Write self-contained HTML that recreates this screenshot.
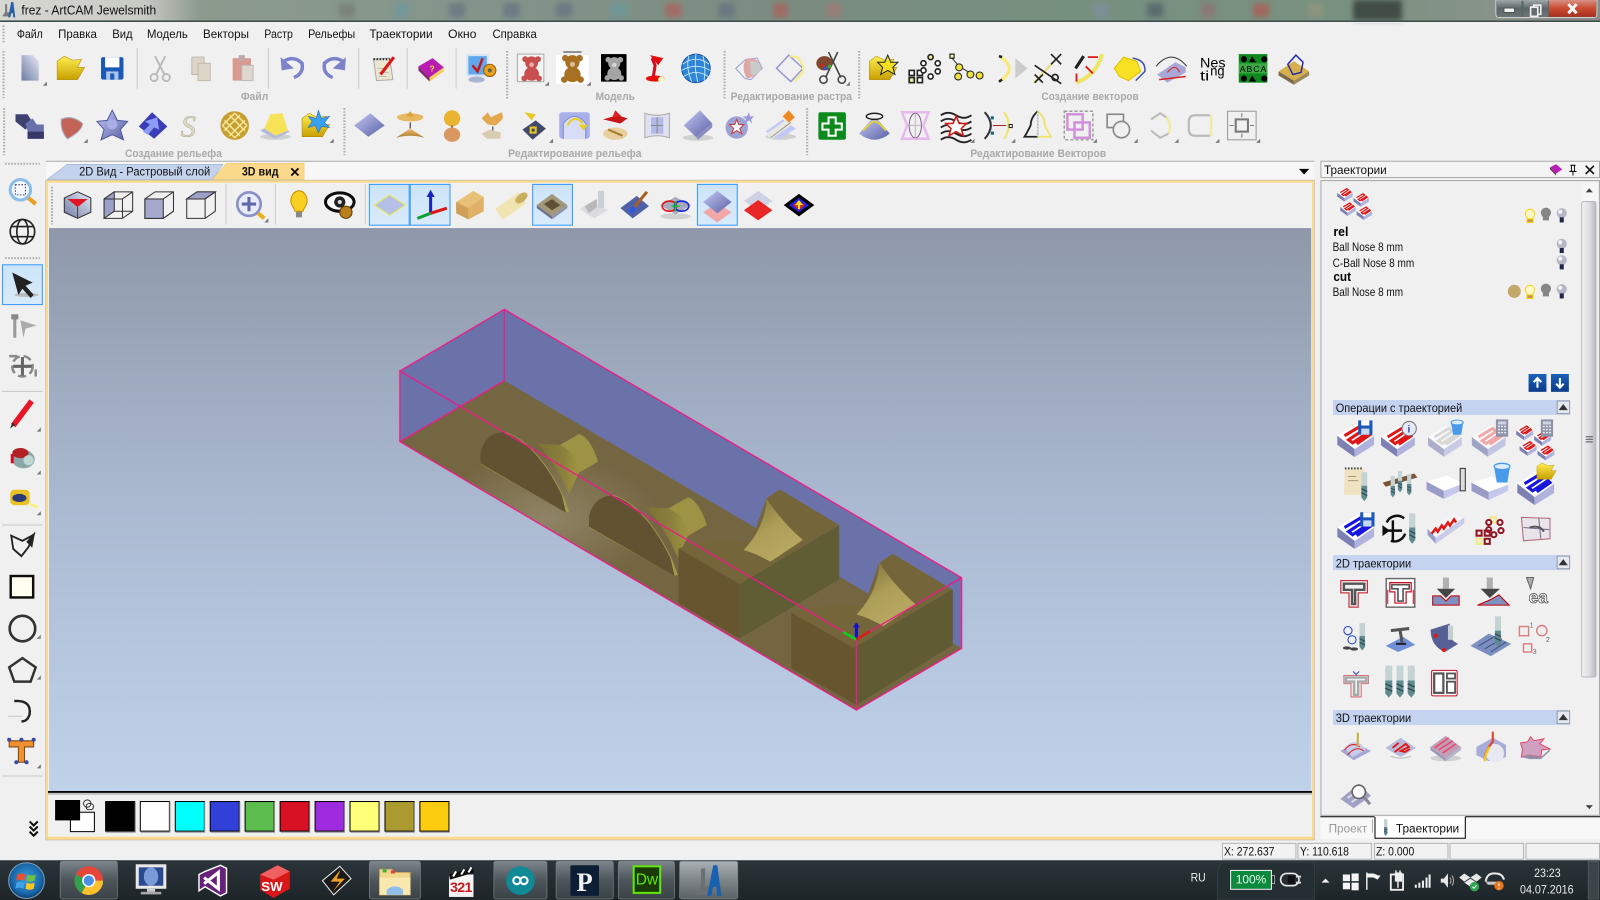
<!DOCTYPE html>
<html lang="ru"><head><meta charset="utf-8"><title>frez - ArtCAM Jewelsmith</title>
<style>
html,body{margin:0;padding:0;background:#f0f0f0;overflow:hidden}
svg{display:block}
text{font-family:"Liberation Sans","DejaVu Sans",sans-serif;font-size:12px}
.l{font-weight:bold;font-size:10.5px;fill:#a9a9a9}
.ne{vector-effect:non-scaling-stroke}
</style></head><body>
<svg xmlns="http://www.w3.org/2000/svg" width="1600" height="900" viewBox="0 0 1568 882" fill="#111">
<defs>
<filter id="s" x="-2%" y="-2%" width="104%" height="104%"><feGaussianBlur stdDeviation=".35"/></filter>
<filter id="b3" x="-20%" y="-50%" width="140%" height="200%"><feGaussianBlur stdDeviation="2.5"/></filter>
<linearGradient id="tb" x1="0" x2="1" y1="0" y2="0">
<stop offset="0" stop-color="#d8d8d2"/><stop offset=".09" stop-color="#c8cac4"/><stop offset=".125" stop-color="#8d9a8e"/><stop offset=".3" stop-color="#83958a"/><stop offset=".5" stop-color="#7a8c80"/><stop offset=".68" stop-color="#76907f"/><stop offset=".84" stop-color="#78917f"/><stop offset=".94" stop-color="#8a938a"/><stop offset="1" stop-color="#8a8a86"/>
</linearGradient>
<linearGradient id="vp" x1="0" x2="0" y1="0" y2="1"><stop offset="0" stop-color="#8f98aa"/><stop offset=".5" stop-color="#abbad1"/><stop offset="1" stop-color="#bfd2ea"/></linearGradient>
<linearGradient id="tk" x1="0" x2="0" y1="0" y2="1"><stop offset="0" stop-color="#2b3439"/><stop offset="1" stop-color="#1d2529"/></linearGradient>
<linearGradient id="bt" x1="0" x2="0" y1="0" y2="1"><stop offset="0" stop-color="#7d868b"/><stop offset=".5" stop-color="#4d565b"/><stop offset="1" stop-color="#3a4247"/></linearGradient>
<linearGradient id="ba" x1="0" x2="0" y1="0" y2="1"><stop offset="0" stop-color="#aab0b3"/><stop offset=".5" stop-color="#7e868a"/><stop offset="1" stop-color="#5a6266"/></linearGradient>
<linearGradient id="gb" x1="0" x2="1" y1="0" y2="1"><stop offset="0" stop-color="#c4c9f4"/><stop offset="1" stop-color="#5a60a4"/></linearGradient>
<linearGradient id="gd" x1="1" x2="0" y1="0" y2="1"><stop offset="0" stop-color="#e6eaf4"/><stop offset="1" stop-color="#6f7ca4"/></linearGradient>
<linearGradient id="gy" x1="0" x2="0" y1="0" y2="1"><stop offset="0" stop-color="#ffee50"/><stop offset="1" stop-color="#c8a000"/></linearGradient>
<linearGradient id="go" x1="0" x2="0" y1="0" y2="1"><stop offset="0" stop-color="#f4c070"/><stop offset="1" stop-color="#a87828"/></linearGradient>
<linearGradient id="sb" x1="0" x2="1" y1="0" y2="0"><stop offset="0" stop-color="#f2f2f2"/><stop offset=".5" stop-color="#e0e0e4"/><stop offset="1" stop-color="#b8b8be"/></linearGradient>
<linearGradient id="cl" x1="0" x2="0" y1="0" y2="1"><stop offset="0" stop-color="#d89084"/><stop offset=".5" stop-color="#c84a30"/><stop offset="1" stop-color="#a83020"/></linearGradient>
<linearGradient id="wb" x1="0" x2="0" y1="0" y2="1"><stop offset="0" stop-color="#a0a8a8"/><stop offset=".5" stop-color="#5c6668"/><stop offset="1" stop-color="#6c7476"/></linearGradient>
<linearGradient id="cf" x1="0" x2="1" y1="0" y2="0"><stop offset="0" stop-color="#7c7034"/><stop offset=".6" stop-color="#8a7f3c"/><stop offset="1" stop-color="#a09440"/></linearGradient>
<linearGradient id="fl" x1="0" x2=".6" y1="0" y2="1"><stop offset="0" stop-color="#7a6c38"/><stop offset=".55" stop-color="#ad9e58"/><stop offset="1" stop-color="#b8a962"/></linearGradient>
<linearGradient id="blu" x1="0" x2="0" y1="0" y2="1"><stop offset="0" stop-color="#1a62b8"/><stop offset="1" stop-color="#0c3a88"/></linearGradient>
<radialGradient id="lp" cx=".26" cy=".42" r=".2"><stop offset="0" stop-color="#8f8466"/><stop offset="1" stop-color="#756642"/></radialGradient>
<radialGradient id="orb" cx=".5" cy=".45" r=".6"><stop offset="0" stop-color="#3aa0e0"/><stop offset=".7" stop-color="#1866a8"/><stop offset="1" stop-color="#0c2c58"/></radialGradient>
<linearGradient id="hl" x1="0" x2="0" y1="0" y2="1"><stop offset="0" stop-color="#cce4f8"/><stop offset="1" stop-color="#d8eafa"/></linearGradient>

<polygon id="mk" points="0,4 4,4 4,0" fill="#777"/>

<g id="tp">
<polygon points="-18,-3 -1,10 -1,18 -18,6" fill="#7d80b2"/>
<polygon points="-1,10 18,-3 18,6 -1,18" fill="#aeb2dc"/>
<polygon points="-18,-3 1,-15 18,-3 -1,10" fill="#fff"/>
<path d="M-11,-3 L4,-12 L8,-9 L-7,1 L-3,4 L12,-6 L14,-4 L1,5" fill="none" stroke="currentColor" stroke-width="3.1"/>
</g>
<g id="tps"><use href="#tp" transform="translate(-8,-9) scale(.42)"/><use href="#tp" transform="translate(8,-4) scale(.42)"/><use href="#tp" transform="translate(-5,5) scale(.42)"/><use href="#tp" transform="translate(11,9) scale(.42)"/></g>
<g id="calc"><rect x="-6" y="-8" width="12" height="17" fill="#8d93a8"/><rect x="-4" y="-6" width="8" height="3" fill="#d0d4e0"/><path d="M-4,-1h2m1,0h2m1,0h2M-4,2h2m1,0h2m1,0h2M-4,5h2m1,0h2m1,0h2" stroke="#e8e8f0" stroke-width="1.5"/></g>
<g id="floppy"><rect x="-7" y="-7" width="14" height="14" fill="#1e58b8"/><rect x="-4" y="-7" width="8" height="5" fill="#fff"/><rect x="-4" y="1" width="8" height="6" fill="#c8d8f0"/></g>
<g id="mill"><rect x="-3" y="-15" width="6" height="14" fill="#c4d4d4"/><path d="M-3,-1h6v12l-3,4l-3,-4z" fill="#5f8a90"/><path d="M-3,2l6,3M-3,6l6,3" stroke="#2f4a50" stroke-width="1.2"/></g>
<g id="bin"><path d="M-6,-6 H6 L4,6 H-4 Z" fill="#4a9ae8"/><ellipse cy="-6" rx="6" ry="2.4" fill="#d8ecfa" stroke="#4a9ae8"/></g>
<g id="fold"><polygon points="-14,-7 -7,-12 1,-8 10,-9 6,-1 13,-1 6,11 -14,11" fill="url(#gy)" stroke="#a88000" stroke-width=".5"/></g>
<g id="bear"><circle cx="-7" cy="-10" r="3.2" fill="currentColor"/><circle cx="7" cy="-10" r="3.2" fill="currentColor"/><circle cy="-6" r="7" fill="currentColor"/><ellipse cy="6" rx="8" ry="7.5" fill="currentColor"/><circle cx="-8" cy="11" r="3.2" fill="currentColor"/><circle cx="8" cy="11" r="3.2" fill="currentColor"/><circle cy="-4" r="2.5" fill="#fff" opacity=".55"/></g>
<g id="by"><path d="M-3,4h6v3h-6zM-4.5,-1.5a4.5,4.5 0 1 1 9,0c0,2 -1.5,3 -2,5h-5c-.5,-2 -2,-3 -2,-5z" fill="#fff8c8" stroke="#f6d40c" stroke-width="1"/><rect x="-2.5" y="4" width="5" height="2.5" fill="#c89050"/></g>
<g id="bg"><path d="M-5,-2a5,5 0 1 1 10,0c0,2 -1.5,3 -2,4.5v3h-6v-3c-.5,-1.5 -2,-2.5 -2,-4.5z" fill="#858585"/></g>
<g id="bw"><circle cy="-2" r="5" fill="#b4b7c6"/><circle cx="-1.5" cy="-3.5" r="2" fill="#f4f4f8"/><rect x="-2" y="2" width="4" height="5" fill="#22264a"/></g>
<g id="up"><polygon points="0,-3.5 4.5,2.5 -4.5,2.5" fill="#333"/></g>
<g id="shd"><ellipse rx="15" ry="3" fill="#bbb" opacity=".6"/></g>
<g id="sqdark"><rect x="0" y="0" width="39" height="40" fill="url(#hl)" stroke="#3399ff"/></g>
<g id="cyl">
<path d="M262,522 V490 C270,445 295,428 325,425 C390,445 445,535 480,620 L494,664 L486,668 Z" fill="#a39a4c"/>
<path d="M262,520 V490 C270,445 295,428 322,426 C385,445 440,530 475,615 L486,668 Z" fill="#615231"/>
<path d="M410,461 L470,465 C500,480 518,515 520,548 L494,612 C470,550 445,500 410,461 Z" fill="url(#cf)"/>
<path d="M470,465 L520,432 C545,440 560,480 570,515 L520,548 C518,515 500,480 470,465 Z" fill="#9e9344"/>
</g>
<g id="blk">
<polygon points="0,0 160,107 160,270 0,165" fill="#66552e"/>
<polygon points="160,107 420,-70 420,93 160,270" fill="#605c34"/>
<polygon points="0,0 160,107 420,-70 265,-177 230,-150 190,-20 100,-25" fill="#75653a"/>
<path d="M230,-150 C228,-100 210,-40 170,5 C200,15 225,30 240,40 L325,-25 C290,-60 255,-105 230,-150 Z" fill="url(#fl)"/>
<path d="M0,0 C50,-15 120,-20 170,5 L240,40 L160,107 Z" fill="#75653a"/>
</g>
</defs>

<rect width="1568" height="882" fill="#f0f0f0"/>

<!-- title bar -->
<rect width="1568" height="20" fill="url(#tb)"/>
<g opacity=".5" filter="url(#b3)">
<rect x="332" y="3" width="16" height="14" fill="#6f6f68"/><rect x="387" y="3" width="14" height="14" fill="#5f9ba8"/><rect x="440" y="3" width="16" height="14" fill="#566480"/><rect x="493" y="3" width="16" height="14" fill="#566480"/><rect x="545" y="3" width="16" height="14" fill="#566480"/><rect x="599" y="3" width="16" height="14" fill="#5f9ba8"/><rect x="652" y="3" width="16" height="14" fill="#c84848"/><rect x="704" y="3" width="16" height="14" fill="#566480"/><rect x="758" y="3" width="14" height="14" fill="#c84848"/>
<rect x="810" y="3" width="14" height="14" fill="#b87070"/><rect x="1072" y="3" width="14" height="14" fill="#8090b0"/><rect x="1124" y="3" width="16" height="14" fill="#404a60"/><rect x="1177" y="3" width="14" height="14" fill="#a06070"/><rect x="1228" y="3" width="16" height="14" fill="#c84040"/><rect x="1282" y="3" width="14" height="14" fill="#a09880"/>
</g>
<rect x="1326" y="0" width="48" height="20" fill="#3a4440" filter="url(#b3)" opacity=".9"/>
<rect y="20" width="1568" height="1.6" fill="#3c4a4a"/>
<rect y="21.6" width="1568" height="1" fill="#f4f4f4"/>
<!-- app icon -->
<g transform="translate(8,10)"><path d="M-6,6 L-3,2 L-3,-6 H-1 V2 H1 V6 Z" fill="#7a7a7a"/><path d="M0,7 L3,-8 H5 L7,7 H5 L4.5,3 H3 L2,7Z" fill="#2860a8"/></g>
<text x="21" y="14" textLength="132" lengthAdjust="spacingAndGlyphs" style="font-size:12.5px">frez - ArtCAM Jewelsmith</text>
<!-- window controls -->
<g>
<path d="M1466,0 V14 Q1466,17 1469,17 H1562 Q1565,17 1565,14 V0 Z" fill="#5a6666" stroke="#e8e8e8" stroke-width=".8"/>
<rect x="1467" y="0" width="24" height="16.5" fill="url(#wb)"/><rect x="1493" y="0" width="24" height="16.5" fill="url(#wb)"/><rect x="1518" y="0" width="46" height="16.5" fill="url(#cl)"/>
<rect x="1474" y="8" width="10" height="4" fill="#f4f4f4" stroke="#333" stroke-width=".5"/>
<rect x="1503" y="5" width="7" height="9" fill="none" stroke="#f0f0f0" stroke-width="1.6"/><rect x="1500" y="7" width="7" height="9" fill="#656e70" stroke="#f0f0f0" stroke-width="1.6"/>
<path d="M1537,4 L1545,13 M1545,4 L1537,13" stroke="#f6f6f6" stroke-width="3"/>
</g>

<!-- menu -->
<path d="M3.5,25V43M3.5,50V96M4,106V152M497,50V97M337.5,106V152M710,50V97M842,50V97M791,106V152" stroke="#aaa" stroke-width="2" stroke-dasharray="1.5 1.5" fill="none"/>
<g>
<text x="16.5" y="37" textLength="25.5" lengthAdjust="spacingAndGlyphs">Файл</text>
<text x="57" y="37" textLength="38" lengthAdjust="spacingAndGlyphs">Правка</text>
<text x="110" y="37" textLength="20" lengthAdjust="spacingAndGlyphs">Вид</text>
<text x="144" y="37" textLength="40" lengthAdjust="spacingAndGlyphs">Модель</text>
<text x="199" y="37" textLength="45" lengthAdjust="spacingAndGlyphs">Векторы</text>
<text x="259" y="37" textLength="28" lengthAdjust="spacingAndGlyphs">Растр</text>
<text x="302" y="37" textLength="46" lengthAdjust="spacingAndGlyphs">Рельефы</text>
<text x="362" y="37" textLength="62" lengthAdjust="spacingAndGlyphs">Траектории</text>
<text x="439" y="37" textLength="28" lengthAdjust="spacingAndGlyphs">Окно</text>
<text x="482.6" y="37" textLength="43.5" lengthAdjust="spacingAndGlyphs">Справка</text>
</g>

<!-- separators row 1 -->
<path d="M134.5,47V87M263,47V87M351.5,47V87M399,47V87M447,47V87" stroke="#ccc" fill="none"/>
<!-- labels -->
<text class="l" x="236" y="98" textLength="27" lengthAdjust="spacingAndGlyphs">Файл</text>
<text class="l" x="583.7" y="98" textLength="38.5" lengthAdjust="spacingAndGlyphs">Модель</text>
<text class="l" x="716" y="98" textLength="119" lengthAdjust="spacingAndGlyphs">Редактирование растра</text>
<text class="l" x="1020.5" y="98" textLength="95.5" lengthAdjust="spacingAndGlyphs">Создание векторов</text>
<text class="l" x="122.5" y="154" textLength="95" lengthAdjust="spacingAndGlyphs">Создание рельефа</text>
<text class="l" x="498" y="154" textLength="130.7" lengthAdjust="spacingAndGlyphs">Редактирование рельефа</text>
<text class="l" x="951" y="154" textLength="133" lengthAdjust="spacingAndGlyphs">Редактирование Векторов</text>

<g filter="url(#s)">
<!-- ROW 1 -->
<g transform="translate(29,67)"><path d="M-8,-13 H3 L9,-7 V12 H-8 Z" fill="url(#gd)"/></g><use href="#mk" x="42" y="80"/>
<use href="#fold" transform="translate(70,67)"/>
<g transform="translate(110,67)"><rect x="-11" y="-11" width="22" height="22" rx="2" fill="#1e58b8"/><rect x="-7" y="-11" width="14" height="10" fill="#fff"/><rect x="-6" y="3" width="12" height="8" fill="#a8c4e8"/><rect x="-2" y="5" width="4" height="6" fill="#1e58b8"/></g>
<g transform="translate(157,67)" fill="none" stroke="#b8b8b8" stroke-width="1.8"><path d="M-5,-12 L4,6M5,-12 L-4,6"/><circle cx="-6" cy="9" r="3.5"/><circle cx="6" cy="9" r="3.5"/></g>
<g transform="translate(197,67)" fill="#ddd5c8" stroke="#c0b8aa"><rect x="-9" y="-11" width="12" height="17"/><rect x="-3" y="-5" width="12" height="17"/></g>
<g transform="translate(238,67)"><rect x="-10" y="-10" width="18" height="22" fill="#d89a90"/><rect x="-4" y="-13" width="6" height="6" fill="#bcaaa6"/><rect x="-1" y="-3" width="11" height="15" fill="#ded8ce" stroke="#bbb"/></g>
<path d="M278,60 Q288,54 296,62 Q298,72 288,76" fill="none" stroke="#7c82cc" stroke-width="3.4"/><polygon points="275,56 276,69 288,67" fill="#7c82cc"/>
<path d="M336,60 Q326,54 318,62 Q316,72 326,76" fill="none" stroke="#7c82cc" stroke-width="3.4"/><polygon points="339,56 338,69 326,67" fill="#7c82cc"/>
<g transform="translate(376,67)"><polygon points="-10,-9 6,-10 9,11 -7,12" fill="#ece5cf" stroke="#aaa"/><path d="M-10,-9h16" stroke="#333" stroke-dasharray="1.5 1.5" stroke-width="2"/><path d="M-6,0h10M-5,4h10M-5,8h8" stroke="#bbb"/><path d="M-3,6 L10,-11" stroke="#e01818" stroke-width="3"/></g>
<g transform="translate(422,67)"><polygon points="-12,-2 2,-10 13,-1 -1,9" fill="#b81fb0"/><polygon points="-12,-2 -1,9 -1,13 -12,2" fill="#7e2a70"/><polygon points="-1,9 13,-1 13,3 -1,13" fill="#f4d060"/><text x="-1" y="3" style="font-size:8px;font-weight:bold" fill="#ffe040">?</text></g>
<g transform="translate(471,67)"><rect x="-13" y="-13" width="20" height="20" fill="#5fa8f0" stroke="#d8e4f4" stroke-width="2"/><path d="M-8,-3 L-3,3 L2,-10" stroke="#c81818" stroke-width="2.4" fill="none"/><ellipse cx="-4" cy="11" rx="8" ry="3" fill="#a8b4d0"/><circle cx="9" cy="2" r="6" fill="#e8a020" stroke="#985c00"/><circle cx="9" cy="2" r="2" fill="#664"/></g>
<g transform="translate(521,67)"><rect x="-14" y="-14" width="26" height="27" fill="#f4f4f4" stroke="#aaa"/><use href="#bear" color="#c85050" transform="scale(.9)"/></g><use href="#mk" x="534" y="80"/>
<g transform="translate(561,67)"><rect x="-16" y="-13" width="32" height="28" fill="#fff"/><use href="#bear" color="#a87020"/><path d="M-9,-16h18" stroke="#333"/></g><use href="#mk" x="575" y="80"/>
<g transform="translate(602,67)"><rect x="-13" y="-14" width="25" height="27" fill="#000"/><use href="#bear" color="#a4a4a4" transform="scale(.85)"/></g>
<g transform="translate(642,67)"><path d="M-2,10 L0,-3 L-3,-10" stroke="#d01020" stroke-width="3" fill="none"/><path d="M-5,-13 L8,-10 L3,-3 Z" fill="#e01010"/><ellipse cy="10" rx="9" ry="3" fill="#e81010"/><circle cx="6" cy="11" r="3" fill="#fff8c0"/></g>
<g transform="translate(682,67)"><circle r="14" fill="#2f86d8"/><circle r="14" fill="none" stroke="#1858a8"/><path d="M-13,-4 Q0,-14 13,-4M-14,2 Q0,-6 14,2M-12,8 Q0,0 12,8M-7,-12 Q-10,0 -4,13M0,-14 Q-2,0 2,14M7,-12 Q10,0 8,12" stroke="#cfe4f8" fill="none" stroke-width=".9"/></g>
<g transform="translate(734,67)"><polygon points="-13,0 -3,-9 8,-10 13,0 2,11 -4,10" fill="none" stroke="#9aa0d8"/><path d="M-3,-9 Q10,-12 12,0 Q8,8 -2,10 Q-8,0 -3,-9Z" fill="#e0a8a4"/><path d="M1,-7 Q12,-8 12,2 Q6,8 2,6Z" fill="#c8ccc8"/></g>
<g transform="translate(774,67)" fill="none"><polygon points="-13,0 -1,-13 13,0 1,13" stroke="#8f94d8" stroke-width="1.4"/><path d="M0,-12 L8,-11 L13,-2 L13,4 L4,13" stroke="#f6ec80" stroke-width="2"/></g>
<g transform="translate(815,67)"><path d="M6,-16 L-6,9M-3,-16 L9,9" stroke="#444" stroke-width="1.6"/><ellipse cx="-7" cy="-5" rx="8" ry="7" fill="#804830"/><circle cx="-10" cy="-3" r="1.6" fill="#d02020"/><circle cx="-6" cy="0" r="1.6" fill="#2060e0"/><circle cx="-2" cy="-2" r="1.6" fill="#20c040"/><circle cx="-8" cy="11" r="3.6" fill="none" stroke="#444" stroke-width="1.5"/><circle cx="10" cy="11" r="3.6" fill="none" stroke="#444" stroke-width="1.5"/></g><use href="#mk" x="829" y="80"/>
<g transform="translate(866,67)"><use href="#fold"/><polygon points="4,-13 7,-6 14,-6 9,-1 11,6 4,2 -3,6 -1,-1 -6,-6 1,-6" fill="#f4e020" stroke="#222"/></g>
<g transform="translate(907,67)" fill="#fff" stroke="#222" stroke-width="1.6"><rect x="-16" y="2" width="5" height="5"/><rect x="-8" y="2" width="5" height="5"/><rect x="-16" y="9" width="5" height="5" fill="#f4ec90"/><rect x="-8" y="9" width="5" height="5"/><circle cx="5" cy="-11" r="2.5" fill="#f4ec90"/><circle cx="-2" cy="-5" r="2.5"/><circle cx="12" cy="-5" r="2.5"/><circle cx="-2" cy="2" r="2.5"/><circle cx="12" cy="3" r="2.5"/><circle cx="5" cy="8" r="2.5"/></g>
<g transform="translate(947,67)"><path d="M-14,-10 L-7,-2 L6,6" stroke="#333" fill="none"/><rect x="-16" y="-14" width="4" height="4" fill="#f8f8c0" stroke="#000"/><g fill="#f0e040" stroke="#222"><circle cx="-7" cy="-1" r="3.4"/><circle cx="-8" cy="8" r="3.4"/><circle cx="4" cy="6" r="3.4"/><circle cx="13" cy="7" r="3.4"/></g></g>
<g transform="translate(987,67)"><polygon points="8,-10 20,0 8,10" fill="#ccc"/><path d="M-6,-11 Q10,0 -6,12" fill="none" stroke="#f6ea70" stroke-width="3"/><path d="M-8,-12 l3,1M-8,13 l3,-2" stroke="#222" stroke-width="2.5"/></g>
<g transform="translate(1027,67)" stroke="#222" stroke-width="1.6" fill="none"><path d="M-14,14 L13,-14M12,-13 L-14,14" stroke="#e8d860"/><path d="M-13,-3 L13,15M3,-14 L13,-4M3,-4 L13,-14M-13,6 L-5,14M-5,6 L-13,14"/><circle cx="7" cy="9" r="3"/></g>
<g transform="translate(1067,67)"><path d="M-12,14 Q8,6 13,-14" fill="none" stroke="#f0e468" stroke-width="4"/><path d="M-13,0 L-5,-12" stroke="#222" stroke-width="3"/><path d="M-1,-11h10M-12,5v8M-3,-2l7,7" stroke="#e01818" stroke-width="1.8"/></g>
<g transform="translate(1107,67)"><polygon points="-15,0 -6,-11 7,-7 11,3 -1,12 -10,8" fill="#f8e020" stroke="#e0c000"/><path d="M3,-10 Q16,-8 15,3 L6,12" fill="none" stroke="#4050a8" stroke-width="1.5"/></g>
<g transform="translate(1148,67)"><path d="M-15,-2 Q0,-20 15,-2" fill="none" stroke="#333"/><path d="M-14,6 L4,-6 L14,-1 L14,4 L-4,14Z" fill="#a8a8d8"/><path d="M-12,11 L14,8" stroke="#d82020" stroke-width="1.5"/><path d="M-4,4 Q4,-6 8,4" stroke="#d82020" fill="none"/></g>
<text x="1176" y="66" style="font-size:14px" textLength="25" lengthAdjust="spacingAndGlyphs" fill="#000">Nes</text>
<text x="1186" y="74" style="font-size:14px" textLength="14" lengthAdjust="spacingAndGlyphs" fill="#000">ng</text>
<text x="1176" y="79" style="font-size:14px" textLength="9" lengthAdjust="spacingAndGlyphs" fill="#000">ti</text>
<g transform="translate(1228,67)"><rect x="-14" y="-14" width="28" height="28" fill="#10881e"/><rect x="-14" y="-5" width="28" height="10" fill="#3aa844"/><text x="-13" y="3.5" style="font-size:8.5px" fill="#000" textLength="26">ABCA</text><g fill="#000"><circle cx="-9" cy="-9" r="3"/><polygon points="-1,-12 3,-6 -4,-6"/><circle cx="11" cy="-9" r="3"/><circle cx="-9" cy="10" r="3"/><polygon points="-1,7 3,13 -4,13"/><circle cx="11" cy="10" r="3"/></g></g>
<g transform="translate(1268,67)"><polygon points="-15,3 0,-7 15,3 0,12" fill="#d8b048"/><polygon points="-15,3 0,12 0,16 -15,7" fill="#7a6a48"/><polygon points="15,3 0,12 0,16 15,7" fill="#9a8a58"/><path d="M-6,-4 L2,-13 L9,-6 L7,4 L-1,6Z" fill="none" stroke="#2028b0" stroke-width="1.4"/></g>

<!-- ROW 2 -->
<g transform="translate(29,123)"><polygon points="-14,-11 -2,-11 3,-3 -4,4 -14,-4" fill="#3c4070"/><polygon points="-4,-2 3,-7 7,-1 14,-1 14,13 -2,13 -2,5" fill="#6a70ac"/><rect x="-2" y="6" width="16" height="7" fill="#343868"/></g>
<path d="M60,117 Q70,112 81,121 Q80,129 66,136 Q59,128 60,117Z" fill="#c46458" stroke="#a8aab8"/><use href="#mk" x="82" y="136"/>
<g transform="translate(110,123)"><polygon points="0,-15 5,-5 15,-4 8,4 11,14 0,9 -11,14 -8,4 -15,-4 -5,-5" fill="url(#gb)" stroke="#5056a0"/><circle cy="-1" r="5" fill="#a8aee8"/></g>
<g transform="translate(150,123)"><polygon points="-14,1 -1,-13 14,1 1,13" fill="#3a3eb8"/><polygon points="-10,6 -3,-1 -8,-4 4,-8 6,4 1,2 -5,9" fill="#8c9cf8"/></g>
<text x="177" y="134" style="font-family:'Liberation Serif',serif;font-size:30px;font-style:italic" fill="#e0dcc4" stroke="#a8a38a" stroke-width=".5">S</text>
<g transform="translate(230,123)"><circle r="14" fill="#c8a030"/><path d="M-10,-5 L5,10M-5,-10 L10,5M-10,5 L5,-10M-5,10 L10,-5M-12,0 L0,12M0,-12 L12,0M-12,0 L0,-12M0,12 L12,0" stroke="#f8e8a0" stroke-width="1.4"/></g>
<g transform="translate(270,123)"><use href="#shd" y="11"/><polygon points="-15,5 -1,-3 14,6 0,13" fill="#b4b8e0"/><polygon points="-11,3 -5,-11 7,-12 12,5 0,10" fill="#f8e258"/></g>
<g transform="translate(310,123)"><use href="#fold"/><polygon points="2,-15 5,-7 13,-9 8,-3 13,2 5,1 2,7 -1,0 -8,2 -4,-4 -8,-9 0,-7" fill="#38a0f0" stroke="#2060b0" stroke-width=".5"/></g><use href="#mk" x="323" y="136"/>
<g transform="translate(362,123)"><polygon points="-15,0 1,-12 15,0 -1,11" fill="url(#gb)"/></g>
<g transform="translate(402,123)"><ellipse cy="-8" rx="13" ry="4" fill="#e8b860"/><path d="M-4,-9 L0,-14 L4,-9Z" fill="#d8a040"/><path d="M0,-3V3" stroke="#222"/><path d="M-14,12 Q0,8 14,12 L0,3Z" fill="url(#go)"/></g>
<g transform="translate(443,123)"><circle cy="-7" r="8" fill="#e8b430"/><path d="M0,0V5" stroke="#222"/><ellipse cy="9" rx="8" ry="7" fill="#d89860"/></g>
<g transform="translate(483,123)"><path d="M-11,-7 L-5,-13 L-2,-8 L2,-10 L9,-13 L10,-7 L3,0 L-5,-1Z" fill="#e4a850"/><path d="M0,1V5" stroke="#222"/><path d="M-11,8 L-3,4 L8,7 L7,13 L-6,13Z" fill="#d8ccb0"/></g>
<g transform="translate(523,123)"><polygon points="-9,-13 2,-11 -2,-5" fill="#e8c820"/><polygon points="-11,4 2,-5 12,3 -1,14" fill="#404868"/><path d="M-3,2 h5 v5 h-5z" fill="none" stroke="#e8c820" stroke-width="2"/></g><use href="#mk" x="538" y="136"/>
<g transform="translate(563,123)"><rect x="-15" y="-13" width="30" height="26" rx="3" fill="#a8b0ec"/><path d="M-11,13 V-2 Q0,-16 11,-2 V13" fill="#d8dcf8" stroke="#8088c8"/><path d="M-7,0 Q0,-12 8,-2" fill="none" stroke="#e8d020" stroke-width="2"/><polygon points="4,-1 13,-1 9,5" fill="#e8d020"/></g>
<g transform="translate(603,123)"><path d="M-12,-6 L2,-10 L12,-7 L5,-2Z" fill="#c81818"/><path d="M-3,-8 L0,-15 L6,-9" fill="#e02020"/><ellipse cy="8" rx="12" ry="6" fill="#e8cfa0"/><path d="M-7,4 L7,10" stroke="#a87820" stroke-width="2"/></g>
<g transform="translate(644,123)"><path d="M-12,-12 Q0,-8 12,-12 V12 Q0,8 -12,12Z" fill="#dfe1f0" stroke="#aaa"/><rect x="-6" y="-8" width="12" height="16" fill="#b4bae8"/><path d="M-6,0H6M0,-8V8" stroke="#888"/></g>
<g transform="translate(684,123)"><use href="#shd" y="12"/><polygon points="-14,0 2,-15 14,-2 -2,11" fill="url(#gb)"/><polygon points="-2,11 14,-2 14,2 0,14" fill="#8a8ec0"/></g>
<g transform="translate(724,123)"><circle cx="-2" cy="2" r="11" fill="#9ca2d4"/><polygon points="-2,-6 0,-1 5,-1 1,3 3,8 -2,5 -7,8 -5,3 -9,-1 -4,-1" fill="#fff" stroke="#c83a3a"/><polygon points="10,-13 11,-9 15,-9 12,-6 13,-2 10,-5 6,-2 7,-6 4,-9 8,-9" fill="#9a98d8"/></g>
<g transform="translate(765,123)"><use href="#shd" y="11"/><polygon points="-15,6 2,-6 15,3 -1,13" fill="#c4c8f8"/><path d="M-12,11 L11,-5" stroke="#e8e8e0" stroke-width="7"/><path d="M-10,12 L10,-3" stroke="#999"/><polygon points="2,-9 8,-15 14,-8 8,-3" fill="#f08820"/></g>
<g transform="translate(816,123)"><rect x="-14" y="-13" width="27" height="27" rx="2" fill="#0c8a1e"/><path d="M-4,-8h7v6h6v6h-6v6h-7v-6h-6v-6h6z" fill="#0c8a1e" stroke="#fff" stroke-width="2"/></g>
<g transform="translate(857,123)"><path d="M-3,-6 H3 L15,8 Q0,20 -15,8Z" fill="url(#gb)"/><ellipse cy="-9" rx="8" ry="3" fill="none" stroke="#222" stroke-width="1.4"/><path d="M-11,5 Q-2,-5 0,-4 Q4,-4 11,5" fill="none" stroke="#f0d820" stroke-width="1.6"/></g>
<g transform="translate(897,123)" fill="none"><path d="M-13,-13 H13 L8,0 L13,13 H-13 L-8,0Z" stroke="#e8b8ec" stroke-width="2.4"/><ellipse rx="6" ry="12" stroke="#806090"/><path d="M-6,0H6M0,-12V12" stroke="#bbb"/></g>
<g transform="translate(937,123)"><path d="M-15,-10 Q-8,-15 0,-10 T15,-10M-15,-4 Q-8,-9 0,-4 T15,-4M-15,2 Q-8,-3 0,2 T15,2M-15,8 Q-8,3 0,8 T15,8M-15,14 Q-8,9 0,14 T15,14" fill="none" stroke="#222" stroke-width="1.8"/><polygon points="0,-9 3,-2 10,-2 5,3 7,10 0,6 -7,10 -5,3 -10,-2 -3,-2" fill="#fff" stroke="#d01818" stroke-width="1.5"/></g><use href="#mk" x="951" y="136"/>
<g transform="translate(977,123)" fill="none"><path d="M-12,-13 Q0,0 -12,13" stroke="#333" stroke-width="2"/><path d="M7,-13 Q16,0 7,13" stroke="#f0e468" stroke-width="2"/><path d="M-4,0 H9" stroke="#b02020"/><rect x="-6" y="-9" width="3" height="3" fill="#106878"/><rect x="-6" y="6" width="3" height="3" fill="#106878"/><rect x="12" y="-1" width="3" height="3" fill="#fff" stroke="#222"/></g><use href="#mk" x="991" y="136"/>
<g transform="translate(1017,123)" fill="none" stroke-width="1.8"><path d="M0,-14 Q-7,-8 -7,0 Q-11,8 -13,11 H0" stroke="#222"/><path d="M0,-14 Q7,-8 7,0 Q11,8 13,11 H0" stroke="#f0e468"/><path d="M0,-14V11" stroke="#bbb" stroke-dasharray="2 1"/></g>
<g transform="translate(1057,123)" fill="none"><rect x="-14" y="-14" width="28" height="28" stroke="#999" stroke-dasharray="3 2" stroke-width="1.4"/><rect x="-11" y="-11" width="15" height="15" stroke="#d090d8" stroke-width="2.4"/><rect x="-4" y="-3" width="15" height="15" stroke="#d090d8" stroke-width="2.4"/></g><use href="#mk" x="1071" y="136"/>
<g transform="translate(1097,123)" fill="none" stroke="#888" stroke-width="1.6"><rect x="-12" y="-11" width="16" height="13"/><circle cx="2" cy="4" r="8" fill="#f0f0f0"/></g><use href="#mk" x="1111" y="136"/>
<g transform="translate(1137,123)" fill="none"><path d="M-9,-6 L0,-12 L6,-8" stroke="#bbb" stroke-width="2"/><path d="M6,-8 Q12,0 8,8" stroke="#f0ea90" stroke-width="2"/><path d="M8,8 L0,12 L-9,5" stroke="#bbb" stroke-width="2"/></g><use href="#mk" x="1151" y="136"/>
<g transform="translate(1177,123)" fill="none"><path d="M9,-10 H-6 Q-12,-10 -12,-3 V3 Q-12,10 -6,10 H9" stroke="#bbb" stroke-width="2.2"/><path d="M10,-10 V10" stroke="#f0ea90" stroke-width="2"/></g><use href="#mk" x="1191" y="136"/>
<g transform="translate(1217,123)" fill="none"><rect x="-14" y="-14" width="28" height="28" stroke="#999"/><rect x="-6" y="-6" width="12" height="12" stroke="#777" stroke-width="2"/><path d="M0,-12V-8M0,8V12M-12,0H-8M8,0H12" stroke="#777"/></g><use href="#mk" x="1231" y="136"/>
</g>

<!-- Tabs / workspace -->
<rect x="45" y="158" width="1243" height="20" fill="#f7f7f7"/>
<path d="M45,158H1288" stroke="#a8a8a8"/>
<polygon points="46,176 66,161 218.5,161 208,176" fill="#c3d3ee" stroke="#9fb0cc" stroke-width=".6"/>
<polygon points="208,176 222,160 298,160 298,176" fill="#fbd98a" stroke="#e8c878" stroke-width=".6"/>
<text x="77.5" y="172" textLength="128.5" lengthAdjust="spacingAndGlyphs">2D Вид - Растровый слой</text>
<text x="237" y="172" textLength="36" lengthAdjust="spacingAndGlyphs" style="font-weight:bold;font-size:11.5px">3D вид</text>
<path d="M285.5,165 L292.5,172 M292.5,165 L285.5,172" stroke="#000" stroke-width="1.6"/>
<polygon points="1273,165.5 1283,165.5 1278,171" fill="#000"/>
<!-- panel frame -->
<rect x="44.8" y="176.5" width="1243.4" height="646.7" fill="#fbd98a" stroke="#b8b8b0" stroke-width=".6"/>
<rect x="47" y="179" width="1238.8" height="641" fill="#f0f0f0"/>
<g filter="url(#s)">
<path d="M51,183V220" stroke="#aaa" stroke-width="2" stroke-dasharray="1.5 1.5"/>
<path d="M221.5,180V220M270,180V220M358,180V220" stroke="#ccc"/>
<use href="#sqdark" x="362" y="180.7"/><use href="#sqdark" x="402" y="180.7"/><use href="#sqdark" x="522" y="180.7"/><use href="#sqdark" x="683.5" y="180.7"/>
<g transform="translate(76,201)"><polygon points="-13,-7 0,-13 13,-7 13,7 0,13 -13,7" fill="url(#gd)" stroke="#333"/><polygon points="-10,-6 10,-6 0,2" fill="#e01828"/><path d="M0,2V13" stroke="#444"/></g>
<g transform="translate(116,201)" fill="none" stroke="#333"><polygon points="-14,-6 -4,-13 14,-13 14,6 4,13 -14,13"/><polygon points="-14,-6 -4,-13 -4,6 -14,13" fill="#9ca0c8"/><path d="M-4,6H14M-14,-6H4V13M4,-6L14,-13"/></g>
<g transform="translate(156,201)" fill="none" stroke="#333"><polygon points="-14,-6 -4,-13 14,-13 14,6 4,13 -14,13"/><rect x="-14" y="-6" width="18" height="19" fill="#a4a8cc"/><path d="M4,-6L14,-13M4,13L14,6"/></g>
<g transform="translate(197,201)" fill="none" stroke="#333"><polygon points="-14,-6 -4,-13 14,-13 14,6 4,13 -14,13"/><polygon points="-14,-6 -4,-13 14,-13 4,-6" fill="#9ca0c8"/><path d="M-14,-6H4V13M4,-6L14,-13"/></g>
<g transform="translate(244,200)"><circle r="11.5" fill="#e8ecfa" stroke="#8a90c8" stroke-width="2.6"/><path d="M-7,0H7M0,-7V7" stroke="#6066a8" stroke-width="3"/><path d="M9,9 L15,14" stroke="#e8b020" stroke-width="4"/></g><use href="#mk" x="259" y="214"/>
<g transform="translate(293,200)"><path d="M-3,7h6v6h-6z" fill="#888"/><path d="M-8,-3a8,10 0 1 1 16,0c0,4 -3,6 -4,10h-8c-1,-4 -4,-6 -4,-10z" fill="#f8d020" stroke="#c89000"/></g>
<g transform="translate(333,198)"><ellipse rx="14" ry="9" fill="#fff" stroke="#111" stroke-width="3"/><circle r="5.5" fill="#222"/><circle r="2" fill="#ddd"/><circle cx="6" cy="10" r="6" fill="#b8801c" stroke="#5a3a00"/></g>
<g transform="translate(382,201)"><polygon points="-15,0 0,-10 15,0 0,10" fill="#b4c0e8" stroke="#eee850"/></g>
<g transform="translate(422,201)"><path d="M0,8V-12" stroke="#1428c0" stroke-width="3"/><polygon points="-4,-8 0,-15 4,-8" fill="#1428c0"/><path d="M0,8L16,3" stroke="#e01818" stroke-width="3"/><path d="M0,8L-13,13" stroke="#10a030" stroke-width="3"/></g>
<g transform="translate(461,201)"><polygon points="-14,-3 3,-14 13,-8 13,6 -2,14 -14,8" fill="#e8c078"/><polygon points="-14,-3 -2,3 -2,14 -14,8" fill="#d0a058"/><polygon points="-2,3 13,-8 13,6 -2,14" fill="#e0b068"/></g>
<g transform="translate(501,201)"><path d="M-12,9 L11,-7" stroke="#f0e4b0" stroke-width="13"/><ellipse cx="10" cy="-7" rx="4" ry="7" fill="#c8b060" transform="rotate(50 10 -7)"/></g>
<g transform="translate(541,201)"><polygon points="-15,0 0,-11 15,0 0,11" fill="#a09878"/><polygon points="-15,0 0,11 0,14 -15,3" fill="#707090"/><polygon points="15,0 0,11 0,14 15,3" fill="#9090b0"/><polygon points="-8,-1 0,-6 8,0 0,5" fill="#605030"/></g>
<g transform="translate(582,201)"><polygon points="-14,4 -2,-3 14,5 0,13" fill="#dcdce0"/><rect x="4" y="-14" width="6" height="17" fill="#ccd0d4"/><path d="M-9,1 L3,-6 V2 L-5,8Z" fill="#b8b8bc"/></g>
<g transform="translate(622,201)"><polygon points="-14,3 2,-9 14,1 -2,13" fill="#5060a8"/><path d="M-2,4 L12,-13" stroke="#a86020" stroke-width="3"/><path d="M-4,7 L0,2" stroke="#2858e8" stroke-width="4"/></g>
<g transform="translate(662,201)"><use href="#shd" y="11"/><polygon points="-15,0 0,-8 15,0 0,9" fill="#a8a8c0"/><ellipse cx="-6" cy="1" rx="7" ry="5" fill="none" stroke="#e01818" stroke-width="1.6"/><ellipse cx="6" cy="1" rx="7" ry="5" fill="none" stroke="#1828d8" stroke-width="1.6"/><path d="M0,-4V6M-4,1H4" stroke="#10c040" stroke-width="1.4"/></g>
<g transform="translate(703,201)"><polygon points="-14,7 0,-2 14,7 0,17" fill="#f0a8a8"/><polygon points="-14,-3 0,-14 14,-3 0,8" fill="url(#gb)"/></g>
<g transform="translate(743,201)"><polygon points="-14,-4 0,-14 14,-4 0,6" fill="#cfd2e4"/><polygon points="-14,5 0,-5 14,5 0,15" fill="#e82828"/></g>
<g transform="translate(783,201)"><polygon points="-15,0 0,-11 15,0 0,11" fill="#000"/><polygon points="-10,0 0,-7 10,0 0,7" fill="#2020e0"/><polygon points="-6,0 0,-4.5 6,0 0,5" fill="#e02020"/><polygon points="0,-5 4,0 1,0 1,4 -1,4 -1,0 -4,0" fill="#f8e020"/></g>
</g>

<!-- viewport -->
<rect x="48" y="223.5" width="1237" height="552" fill="url(#vp)"/>
<g transform="translate(372.4,284.2) scale(.375,.3267)">
<polygon points="52,243 325,58 1520,863 1520,1075 1245,1260 52,455" fill="#6a72a9"/>
<polygon points="52,455 325,272 1520,1075 1245,1260" fill="url(#lp)"/>
<use href="#cyl"/>
<use href="#cyl" x="284" y="190"/>
<use href="#blk" x="780" y="775"/>
<use href="#blk" x="1075" y="968"/>
<polygon points="1245,1245 1497,1065 1497,900 1245,1075" fill="#615b34"/>
<polygon points="1075,968 1245,1078 1245,1245 1075,1135" fill="#66552e"/>
<g fill="none" stroke="#f01a88">
<path class="ne" stroke-width="1.3" d="M52,243 L325,58 L1520,863 V1075 L1245,1260 L52,455 V243 L1245,1048 L1520,863"/>
<path class="ne" stroke-width="1.3" d="M325,58V272L52,455M1245,1048V1260"/>
</g>
<path class="ne" d="M1245,1048 V1000" stroke="#1010d0" stroke-width="3" fill="none"/>
<polygon points="1236,1012 1245,998 1254,1012" fill="#1010d0"/>
<path class="ne" d="M1245,1048 L1210,1026" stroke="#10d020" stroke-width="2.5" fill="none"/>
<path class="ne" d="M1245,1048 L1280,1024" stroke="#e01818" stroke-width="2.5" fill="none"/>
</g>

<!-- colour bar -->
<rect x="47" y="775.2" width="1238.8" height="1.8" fill="#000"/>
<rect x="47" y="777.5" width="1238.8" height="1.2" fill="#a8a8a8"/>
<rect x="69" y="796" width="23.5" height="19" fill="#fff" stroke="#000"/>
<rect x="54" y="784" width="24.5" height="20" fill="#000"/>
<g fill="none" stroke="#222" stroke-width=".9"><circle cx="85.5" cy="787.5" r="3.6"/><rect x="84.5" y="787.5" width="7" height="6" rx="2.5"/></g>
<g stroke="#000">
<rect x="103.5" y="785.5" width="28.5" height="29" fill="#000"/>
<rect x="137.5" y="785.5" width="28.5" height="29" fill="#fff"/>
<rect x="171.8" y="785.5" width="28.5" height="29" fill="#00ffff"/>
<rect x="206" y="785.5" width="28.5" height="29" fill="#3040d8"/>
<rect x="240.2" y="785.5" width="28.5" height="29" fill="#5cbd4e"/>
<rect x="274.5" y="785.5" width="28.5" height="29" fill="#d81024"/>
<rect x="308.8" y="785.5" width="28.5" height="29" fill="#9f2be0"/>
<rect x="343" y="785.5" width="28.5" height="29" fill="#ffff78"/>
<rect x="377.3" y="785.5" width="28.5" height="29" fill="#aa9a30"/>
<rect x="411.5" y="785.5" width="28.5" height="29" fill="#fccc10"/>
</g>
<path d="M104,815.5H132.5V786M138,815.5H166.5V786M172,815.5H200.5V786M206.5,815.5H235V786M240.5,815.5H269V786M275,815.5H303.5V786M309,815.5H337.5V786M343.5,815.5H372V786M377.5,815.5H406V786M412,815.5H440.5V786" stroke="#888" fill="none"/>

<!-- left toolbar -->
<g filter="url(#s)">
<path d="M5,160.5H39" stroke="#aaa" stroke-width="2" stroke-dasharray="1.5 1.5"/>
<path d="M5,253H39" stroke="#aaa" stroke-width="2" stroke-dasharray="1.5 1.5"/>
<path d="M2,383.5H42M2,514.5H42M2,760.5H42" stroke="#c8c8c8"/>
<g transform="translate(21,187)"><circle cx="-1" cy="-1" r="10" fill="#f4f8ff" stroke="#8abce8" stroke-width="3"/><rect x="-6" y="-6" width="10" height="10" fill="none" stroke="#446" stroke-dasharray="1.5 1.5"/><path d="M7,7 L14,13" stroke="#e8a020" stroke-width="4"/></g>
<g transform="translate(22,227)" fill="none" stroke="#222" stroke-width="1.6"><circle r="12"/><ellipse rx="5.5" ry="12"/><path d="M-11,-5H11M-11,5H11"/></g>
<rect x="2.5" y="259.5" width="39" height="39" fill="url(#hl)" stroke="#3399ff"/>
<g transform="translate(22,280)"><ellipse cx="4" cy="9" rx="12" ry="2" fill="#bbb"/><polygon points="-10,-13 10,-3 3,0 11,9 8,12 0,3 -4,9" fill="#222"/></g>
<g transform="translate(22,320)"><rect x="-9" y="-9" width="3" height="20" fill="#999"/><rect x="-11" y="-12" width="7" height="5" fill="#888"/><polygon points="-2,-6 14,-1 3,2 1,11" fill="#aaa"/></g>
<g transform="translate(22,359)" fill="none" stroke="#888" stroke-width="2.4"><circle r="10" stroke-dasharray="8 4"/><path d="M0,-9V9M-9,0H9" stroke="#666" stroke-width="3"/><path d="M-13,-10H-5M13,10V3" stroke="#888"/></g>
<g transform="translate(21,406)"><path d="M-8,11 L10,-13" stroke="#e81828" stroke-width="5.5"/><polygon points="-11,14 -9,8 -6,10" fill="#333"/></g><use href="#mk" x="36" y="419"/>
<g transform="translate(22,448)"><ellipse cx="1" cy="2" rx="11" ry="9" fill="#8aa8a8"/><ellipse cx="-2" cy="-4" rx="8" ry="5" fill="#b02028"/><path d="M-10,-3 V6" stroke="#d01020" stroke-width="3"/><ellipse cx="6" cy="3" rx="5" ry="5" fill="#c0d8d4"/></g><use href="#mk" x="36" y="461"/>
<g transform="translate(22,488)"><rect x="-12" y="-8" width="19" height="15" rx="4" fill="#e8c020"/><ellipse cx="-3" cy="0" rx="7" ry="4" fill="#2a3a78"/><path d="M7,6 L15,9" stroke="#f8f080" stroke-width="3"/></g><use href="#mk" x="36" y="501"/>
<g transform="translate(22,534)" fill="none" stroke="#222" stroke-width="1.8"><path d="M-11,-9 L0,-4 L11,-10 L6,2 L-1,11 L-9,4Z"/><polygon points="11,-10 5,-3 9,1" fill="#222"/></g>
<rect x="10.5" y="564.5" width="22" height="21" fill="#fffff0" stroke="#111" stroke-width="2.4"/>
<circle cx="22" cy="616" r="12.5" fill="none" stroke="#333" stroke-width="2.6"/>
<polygon points="22,645 35,654 30,668 14,668 9,654" fill="none" stroke="#333" stroke-width="2.4"/><use href="#mk" x="36" y="662"/><use href="#mk" x="36" y="622"/>
<path d="M14,687 Q31,686 29,700 Q27,707 21,707" fill="none" stroke="#222" stroke-width="2.4"/><path d="M8,702 H22" stroke="#ccc"/>
<g transform="translate(21,736)"><path d="M-12,-10H12V-4H3V11H-3V-4H-12Z" fill="#f09030" stroke="#7a4a18"/><g fill="#3848a0"><circle cx="-12" cy="-11" r="2"/><circle cx="0" cy="-11" r="2"/><circle cx="12" cy="-11" r="2"/><circle cx="-5" cy="11" r="2"/><circle cx="5" cy="11" r="2"/></g></g><use href="#mk" x="36" y="749"/>
<path d="M29,805 L33,809 L37,805M29,810 L33,814 L37,810M29,815 L33,819 L37,815" fill="none" stroke="#111" stroke-width="2"/>
</g>

<!-- right panel -->
<rect x="1294.5" y="158" width="273" height="16" fill="#f4f4f4" stroke="#a8a8a8"/>
<text x="1297.5" y="170.5" textLength="61.5" lengthAdjust="spacingAndGlyphs">Траектории</text>
<g transform="translate(1525,166)"><polygon points="-6,-2 0,-5 6,0 0,4" fill="#b81fb0"/><polygon points="-6,-2 0,4 0,6 -6,0" fill="#6a2a60"/></g>
<path d="M1539,162H1544M1540,162V168H1543V162M1541.5,168V172M1538,168H1545" stroke="#111" fill="none"/>
<path d="M1554,162.5L1562,170.5M1562,162.5L1554,170.5" stroke="#111" stroke-width="1.6"/>
<rect x="1294.5" y="177" width="273" height="622" fill="#f0f0f0" stroke="#a8a8a8"/>
<rect x="1550" y="179" width="16" height="18" fill="#f6f6f6"/>
<rect x="1550" y="197.5" width="14" height="466" rx="2" fill="url(#sb)" stroke="#b8b8b8"/>
<polygon points="1557.5,184.5 1561,188.5 1554,188.5" fill="#444"/>
<polygon points="1557.5,793 1561,789 1554,789" fill="#444"/>
<path d="M1554,428H1561M1554,430.5H1561M1554,433H1561" stroke="#555"/>

<use href="#tps" color="#e01818" transform="translate(1326,199)"/>
<use href="#by" transform="translate(1499.4,211)"/><use href="#bg" transform="translate(1515,210.5)"/><use href="#bw" transform="translate(1530.5,211)"/>
<text x="1306.7" y="231.5" textLength="14.7" lengthAdjust="spacingAndGlyphs" style="font-weight:bold;font-size:12.5px" fill="#000">rel</text>
<text x="1306" y="246" textLength="69" lengthAdjust="spacingAndGlyphs">Ball Nose 8 mm</text>
<text x="1306" y="261.5" textLength="80" lengthAdjust="spacingAndGlyphs">C-Ball Nose 8 mm</text>
<text x="1306.7" y="275.5" textLength="17.3" lengthAdjust="spacingAndGlyphs" style="font-weight:bold;font-size:12.5px" fill="#000">cut</text>
<text x="1306" y="290" textLength="69" lengthAdjust="spacingAndGlyphs">Ball Nose 8 mm</text>
<use href="#bw" transform="translate(1530.5,241)"/><use href="#bw" transform="translate(1530.5,257)"/>
<circle cx="1484" cy="285.5" r="6.4" fill="#c4a76a"/>
<use href="#by" transform="translate(1499.4,285.5)"/><use href="#bg" transform="translate(1515,285)"/><use href="#bw" transform="translate(1530.5,285.5)"/>
<g fill="url(#blu)"><rect x="1498" y="366.5" width="17.5" height="17.5"/><rect x="1520" y="366.5" width="17.5" height="17.5"/></g>
<path d="M1506.7,380V371M1503,374.5L1506.7,370.5L1510.4,374.5M1528.7,370.5V379.5M1525,376L1528.7,380L1532.4,376" stroke="#fff" stroke-width="2" fill="none"/>

<!-- sections -->
<g fill="#c4d4f0"><rect x="1306.3" y="392" width="232.3" height="14.7"/><rect x="1306.3" y="544" width="232.3" height="14.7"/><rect x="1306.3" y="695.8" width="232.3" height="14.7"/></g>
<g fill="#e4e8f0" stroke="#808898" stroke-width=".8"><rect x="1526" y="393" width="12.3" height="12.4"/><rect x="1526" y="545" width="12.3" height="12.4"/><rect x="1526" y="696.8" width="12.3" height="12.4"/></g>
<use href="#up" x="1532" y="399.4"/><use href="#up" x="1532" y="551.4"/><use href="#up" x="1532" y="703.2"/>
<text x="1309" y="404" textLength="124" lengthAdjust="spacingAndGlyphs">Операции с траекторией</text>
<text x="1309" y="556" textLength="74" lengthAdjust="spacingAndGlyphs">2D траектории</text>
<text x="1309" y="707.8" textLength="74" lengthAdjust="spacingAndGlyphs">3D траектории</text>

<g filter="url(#s)">
<!-- op icons r1 -->
<use href="#tp" color="#e01818" transform="translate(1328.6,430)"/><use href="#floppy" transform="translate(1338,419)"/>
<use href="#tp" color="#e01818" transform="translate(1370,431) scale(.92)"/><g transform="translate(1381,420)"><circle r="7" fill="#e4e8f8" stroke="#777"/><text x="-1.6" y="4" style="font-size:10px;font-weight:bold" fill="#2848a8">i</text></g>
<use href="#tp" color="#c8c8c8" transform="translate(1416,431) scale(.92)" opacity=".6"/><use href="#bin" transform="translate(1428,420)"/>
<use href="#tp" color="#f08888" transform="translate(1459,431) scale(.92)" opacity=".7"/><use href="#calc" transform="translate(1472,419)"/>
<use href="#tps" color="#e01818" transform="translate(1503,433) scale(1.1)"/><use href="#calc" transform="translate(1516,419)"/>
<!-- r2 -->
<g transform="translate(1328,473)"><polygon points="-10,-14 8,-14 10,12 -11,12" fill="#efe2c0"/><path d="M-10,-14h18" stroke="#444" stroke-width="2" stroke-dasharray="1.5 1.5"/><path d="M-7,-6h8M-7,-2h10" stroke="#a89878"/></g><use href="#mill" transform="translate(1337,477) scale(.95)"/>
<g transform="translate(1372,473)"><polygon points="-17,0 14,-9 17,-5 -14,4" fill="#7a5234"/><use href="#mill" transform="translate(-7,4) scale(.7)"/><use href="#mill" transform="translate(0,-1) scale(.7)"/><use href="#mill" transform="translate(9,2) scale(.7)"/></g>
<g transform="translate(1416,475)"><polygon points="-18,-3 2,-9 18,-1 -1,6" fill="#fff"/><polygon points="-18,-3 -1,6 -1,14 -18,5" fill="#9a9cc8"/><polygon points="-1,6 18,-1 18,5 -1,14" fill="#c4c8ec"/></g><rect x="1431" y="459" width="5" height="22" fill="#ddd" stroke="#333"/>
<g transform="translate(1460,476)"><polygon points="-18,-3 2,-9 18,-1 -1,6" fill="#fff"/><polygon points="-18,-3 -1,6 -1,14 -18,5" fill="#9a9cc8"/><polygon points="-1,6 18,-1 18,5 -1,14" fill="#c4c8ec"/></g><use href="#bin" transform="translate(1472,465) scale(1.3)"/>
<use href="#tp" color="#1818e0" transform="translate(1505,477)"/><use href="#fold" transform="translate(1516,462) scale(.7)"/>
<!-- r3 -->
<use href="#tp" color="#1818e0" transform="translate(1328.6,520)"/><use href="#floppy" transform="translate(1340,509)"/>
<g transform="translate(1368,518)" fill="none" stroke="#111" stroke-width="2.4"><path d="M-9,-6 A11,11 0 0 1 8,-10M-5,12 A11,11 0 0 0 9,5"/><path d="M-12,2H6M-3,-8V12"/><polygon points="-12,-1 -8,2 -12,5" fill="#111"/></g><use href="#mill" transform="translate(1384,518)"/>
<g transform="translate(1417,518)"><polygon points="-18,3 8,-15 18,-8 -10,12" fill="#f4f4f4"/><polygon points="-18,3 -10,12 -10,18 -18,9" fill="#9a9cc8" transform="translate(0,-3)"/><polygon points="-10,9 18,-11 18,-5 -10,15" fill="#c8cce8"/><path d="M-14,5 L-10,0 -8,3 -4,-3 -2,0 2,-6 4,-3 8,-9 10,-6" fill="none" stroke="#e01818" stroke-width="2.4"/></g>
<g transform="translate(1461,518)" fill="none" stroke="#901828" stroke-width="2"><rect x="-14" y="2" width="5" height="5"/><rect x="-6" y="2" width="5" height="5"/><rect x="-14" y="10" width="5" height="5" stroke="#f4ea80"/><rect x="-6" y="10" width="5" height="5"/><rect x="0" y="-11" width="5" height="5" stroke="#f4ea80"/><circle cx="-2" cy="-6" r="2.5"/><circle cx="9" cy="-6" r="2.5"/><circle cx="-2" cy="1" r="2.5"/><circle cx="10" cy="2" r="2.5"/><circle cx="3" cy="6" r="2.5"/></g>
<g transform="translate(1505,517)"><polygon points="-14,-10 14,-9 14,11 -12,13" fill="#e8e4ea" stroke="#b06878"/><path d="M-12,0 L13,2M3,-9 L5,11" stroke="#706888"/><path d="M-6,0 Q4,-3 8,4" stroke="#555" fill="none" stroke-width="2"/></g>
<!-- 2D r1 -->
<path d="M1314,569H1340V581H1331V595H1322V581H1314Z" fill="#f0f0f0" stroke="#c01020" stroke-width="1"/><path d="M1317,572H1337V578H1328V592H1325V578H1317Z" fill="none" stroke="#555" stroke-width="2.4"/>
<rect x="1358.5" y="567" width="28" height="28" fill="#fff" stroke="#666" stroke-width="1.4"/><path d="M1362,571H1383V580H1378V591H1367V580H1362Z" fill="none" stroke="#c81020" stroke-width="1.2"/><path d="M1364,573H1381V577H1375V589H1370V577H1364Z" fill="none" stroke="#555" stroke-width="1.6"/><path d="M1360,578V592M1385,578V592" stroke="#c81020"/>
<g transform="translate(1417,581)"><rect x="-3" y="-15" width="6" height="11" fill="#b0b0b0"/><polygon points="-9,-4 9,-4 0,5" fill="#444"/><polygon points="-13,3 -5,3 0,8 5,3 13,3 13,12 -13,12" fill="#8090c0" stroke="#c00000"/></g>
<g transform="translate(1461,581)"><rect x="-4" y="-15" width="6" height="11" fill="#b0b0b0"/><polygon points="-10,-4 9,-4 -1,5" fill="#444"/><polygon points="-13,12 -1,7 8,2 18,12" fill="#8090c0" stroke="#c00000"/></g>
<g transform="translate(1505,581)"><polygon points="-9,-15 -2,-15 -5,-4" fill="#aaa" stroke="#666"/><text x="-7" y="10" style="font-size:17px;font-weight:bold" fill="#fff" stroke="#444" stroke-width=".7">ea</text></g>
<!-- 2D r2 -->
<g transform="translate(1328,625)"><circle cx="-7" cy="-7" r="4" fill="none" stroke="#2040c0"/><circle cx="-3" cy="2" r="4" fill="none" stroke="#2040c0"/><use href="#mill" transform="translate(7,-1) scale(.9)"/><ellipse cx="-8" cy="10" rx="4" ry="1.6" fill="#444"/><ellipse cx="-1" cy="11" rx="4" ry="1.6" fill="#444"/></g>
<g transform="translate(1372,625)"><polygon points="-14,8 3,-1 15,7 -2,14" fill="#7090d8"/><path d="M-4,6 H6" stroke="#223" stroke-width="2"/><path d="M-9,-7 L9,-9 M0,-8 L2,5" stroke="#555" stroke-width="3"/></g>
<g transform="translate(1416,625)"><path d="M-14,-8 L5,-14 Q0,0 13,6 L0,14 Q-14,8 -14,-8Z" fill="#566094"/><rect x="3" y="-12" width="5" height="14" fill="#c0d0d0"/><circle cx="-9" cy="-2" r="2" fill="#e01818"/><circle cx="-1" cy="12" r="2" fill="#e01818"/></g>
<g transform="translate(1461,625)"><polygon points="-20,8 -2,-4 20,6 0,18" fill="#7a8ec0"/><path d="M-12,8 L5,-2M-6,11 L11,1M0,14 L15,4" stroke="#405080"/><use href="#mill" transform="translate(7,-6)"/></g>
<g transform="translate(1505,625)" fill="none" stroke="#d88080" stroke-width="1.4"><rect x="-16" y="-11" width="9" height="9"/><circle cx="6" cy="-7" r="5"/><rect x="-12" y="6" width="8" height="8"/><text x="-6" y="-10" style="font-size:7px;stroke:none" fill="#666">1</text><text x="10" y="4" style="font-size:7px;stroke:none" fill="#666">2</text><text x="-3" y="16" style="font-size:7px;stroke:none" fill="#666">3</text></g>
<!-- 2D r3 -->
<path d="M1317,662H1341V670H1334V683H1324V670H1317Z" fill="none" stroke="#d07078"/><path d="M1319,664H1339V668H1331V681H1327V668H1319Z" fill="none" stroke="#aaa" stroke-width="2.4"/><path d="M1326,658 L1329,661 L1332,658" stroke="#2040b0" fill="none"/>
<use href="#mill" transform="translate(1361,668) scale(1.15,1.05)"/><use href="#mill" transform="translate(1372,668) scale(1.15,1.05)"/><use href="#mill" transform="translate(1383,668) scale(1.15,1.05)"/>
<g fill="none"><rect x="1403" y="657" width="25" height="25" rx="1.5" fill="#fff" stroke="#c01020"/><rect x="1405.5" y="660" width="9" height="19" stroke="#555" stroke-width="2.2"/><rect x="1418" y="660" width="8" height="5" stroke="#555" stroke-width="1.8"/><rect x="1418" y="668" width="8" height="11" stroke="#555" stroke-width="1.8"/></g>
<!-- 3D r1 -->
<g transform="translate(1328.6,732)"><polygon points="-15,4 0,-4 15,4 -2,13" fill="#a4a8d4"/><path d="M-11,1 Q-3,-9 6,-2 L10,3 L-3,10Z" fill="#c8cce8"/><path d="M-11,3 Q-4,-6 4,0M-8,8 Q0,-2 8,4" fill="none" stroke="#e01818"/><rect x="1" y="-14" width="2" height="14" fill="#c8b040"/></g>
<g transform="translate(1372.7,732)"><polygon points="-15,1 0,-9 15,1 0,10" fill="#b8bcdc"/><path d="M-6,5 L5,-3 L8,0 L0,4 L4,5 L9,2M-2,-4 L-8,1" fill="none" stroke="#e01818" stroke-width="1.8"/><path d="M-10,9 Q0,13 10,9" stroke="#bbb" fill="none"/></g>
<g transform="translate(1416.8,732)"><use href="#shd" y="11"/><polygon points="-15,0 0,-11 15,0 0,11" fill="#c0a0b8"/><polygon points="-15,0 0,11 0,14 -15,3" fill="#9a98b8"/><polygon points="15,0 0,11 0,14 15,3" fill="#b4b4cc"/><path d="M-11,1 L3,-9M-7,3 L7,-6M-3,6 L10,-3" stroke="#e84868" stroke-width="1.6"/></g>
<g transform="translate(1460.9,732)"><polygon points="-14,0 2,-9 15,-2 15,10 -2,14 -14,8" fill="#a8acd8"/><circle cx="4" cy="6" r="9" fill="#e8e8f0"/><path d="M-6,12 Q-5,3 2,-5 V-15" stroke="#e84020" stroke-width="2" fill="none"/><path d="M-6,14 Q-5,6 -1,0" stroke="#f0c820" stroke-width="2.4" fill="none"/></g>
<g transform="translate(1505,732)"><polygon points="-5,-10 -2,-6 8,-8 4,-3 14,2 6,3 5,10 -6,8 -14,10 -13,2 -15,-4 -8,-5" fill="#d0a0c0" stroke="#e84868"/><polygon points="-14,10 -6,12 5,12 14,4 14,2 5,10 -6,8" fill="#9090a8"/></g>
<!-- 3D r2 -->
<g transform="translate(1328.6,779)"><polygon points="-15,4 3,-11 15,1 -2,13" fill="#a0a0c4"/><path d="M-8,3 L4,-5M-4,7 L8,-1" stroke="#d8d8e8" stroke-width="2"/><circle cx="3" cy="-3" r="6.5" fill="#fff" stroke="#666" stroke-width="1.6"/><path d="M8,2 L14,9" stroke="#889" stroke-width="3"/></g>
</g>

<!-- right tabs -->
<rect x="1294" y="800" width="274" height="22" fill="#f8f8f8"/>
<path d="M1294,800.4H1347" stroke="#000"/>
<path d="M1436,800.4H1568" stroke="#000"/>
<rect x="1348" y="801" width="88" height="20.5" fill="#fff"/>
<path d="M1347.5,800.5V821.5H1436V800.5" fill="none" stroke="#000"/>
<text x="1302" y="816" textLength="38" lengthAdjust="spacingAndGlyphs" style="fill:#9a9a9a">Проект</text>
<path d="M1345,803V816" stroke="#aaa"/>
<use href="#mill" transform="translate(1358,811) scale(.55)"/>
<text x="1368" y="816" textLength="62" lengthAdjust="spacingAndGlyphs">Траектории</text>

<!-- status bar -->
<g fill="#f2f2f2" stroke="#b4b4b4"><rect x="1198" y="826.5" width="72" height="15.5"/><rect x="1272" y="826.5" width="72" height="15.5"/><rect x="1347" y="826.5" width="72" height="15.5"/><rect x="1421" y="826.5" width="72" height="15.5"/><rect x="1495.5" y="826.5" width="72" height="15.5"/></g>
<text x="1199.5" y="838.5" textLength="49.5" lengthAdjust="spacingAndGlyphs">X: 272.637</text>
<text x="1274" y="838.5" textLength="48" lengthAdjust="spacingAndGlyphs">Y: 110.618</text>
<text x="1348.5" y="838.5" textLength="37.5" lengthAdjust="spacingAndGlyphs">Z: 0.000</text>

<!-- taskbar -->
<rect y="843" width="1568" height="39" fill="url(#tk)"/>
<rect y="843" width="1568" height=".8" fill="#4c575c"/>
<g stroke="#7a8488" stroke-width=".7">
<rect x="59" y="844" width="56" height="37" rx="2" fill="url(#bt)"/>
<rect x="362" y="844" width="50" height="37" rx="2" fill="url(#bt)"/>
<rect x="484" y="844" width="52" height="37" rx="2" fill="url(#bt)"/>
<rect x="545" y="844" width="56" height="37" rx="2" fill="url(#bt)"/>
<rect x="606" y="844" width="55" height="37" rx="2" fill="url(#bt)"/>
<rect x="666" y="844" width="57" height="37" rx="2" fill="url(#ba)"/>
</g>
<circle cx="26" cy="863" r="17.5" fill="url(#orb)" stroke="#7aa0c0"/>
<g transform="translate(26,863)"><path d="M-9,-6 Q-5,-8 -1,-6 L-2,0 Q-6,-2 -10,0Z" fill="#f05030"/><path d="M1,-6 Q5,-4 9,-6 L8,0 Q4,2 0,0Z" fill="#70c040"/><path d="M-10,2 Q-6,0 -2,2 L-3,8 Q-7,6 -11,8Z" fill="#40a0e8"/><path d="M0,2 Q4,4 8,2 L7,8 Q3,10 -1,8Z" fill="#f8c820"/></g>
<g transform="translate(87,863)"><circle r="14" fill="#e8453a"/><path d="M0,0 L-12.5,-6 A14,14 0 0 0 -7,12.2 Z" fill="#30a14e"/><path d="M14,0 A14,14 0 0 1 -7,12.2 L0,0 Z" fill="#fbc02d"/><circle r="6.5" fill="#fff"/><circle r="5" fill="#4a8ee8"/></g>
<g transform="translate(148,861)"><rect x="-15" y="-14" width="30" height="24" fill="#e8e8e8"/><rect x="-12" y="-11" width="24" height="18" fill="#2a4a90"/><ellipse rx="7" ry="9" cy="-2" fill="#7a9ad8"/><rect x="-4" y="10" width="8" height="3" fill="#ccc"/><rect x="-10" y="13" width="20" height="2.5" fill="#aaa"/></g>
<g transform="translate(208,863)"><polygon points="-13,-6 -7,-9 8,-15 14,-12 14,12 8,15 -7,6 -13,10" fill="#68217a" stroke="#fff" stroke-width="1.4"/><path d="M-8,-3 L6,8 V-8 L-8,3" fill="none" stroke="#fff" stroke-width="3"/></g>
<g transform="translate(269,863)"><polygon points="-14,-6 3,-15 15,-9 15,8 -1,17 -14,9" fill="#d81818"/><polygon points="-14,-6 3,-15 15,-9 -1,-1" fill="#f06060"/><text x="-13" y="10" style="font-size:13px;font-weight:bold" fill="#fff">SW</text></g>
<g transform="translate(330,863)"><polygon points="-14,0 3,-14 14,-2 -3,14" fill="#1a1a1a" stroke="#eee"/><path d="M4,-11 L-6,1 H3 L-4,11 L8,-2 H0Z" fill="#f0a020"/></g>
<g transform="translate(387,863)"><polygon points="-15,-11 -3,-11 0,-8 15,-8 15,14 -15,14" fill="#f2d88c" stroke="#c8a860"/><rect x="-15" y="-3" width="30" height="17" fill="#f8e8b0"/><path d="M-8,14V9Q0,2 8,9V14" fill="#90c0e8"/><rect x="-12" y="-11" width="4" height="3" fill="#40b040"/><rect x="-4" y="-10" width="4" height="3" fill="#e04040"/></g>
<g transform="translate(452,863)"><rect x="-12" y="-6" width="24" height="22" fill="#f4f4f4"/><path d="M-12,-6 L11,-13 L13,-8 L-11,-1Z" fill="#111"/><path d="M-8,-4L-5,-9M0,-6L3,-11M7,-8L10,-13" stroke="#fff" stroke-width="2"/><text x="-11" y="11" style="font-size:14px;font-weight:bold" fill="#c81818" textLength="22">321</text></g>
<g transform="translate(510,863)"><circle r="14" fill="#0f8a96"/><path d="M-8,0 a3.5,3.5 0 0 1 7,0 a3.5,3.5 0 1 0 7,0 a3.5,3.5 0 0 0 -7,0 a3.5,3.5 0 1 1 -7,0" fill="none" stroke="#fff" stroke-width="2" transform="translate(1,0)"/></g>
<g transform="translate(573,863)"><rect x="-14" y="-15" width="28" height="30" rx="1" fill="#0c1e34"/><text x="-8" y="10" style="font-family:'Liberation Serif',serif;font-size:26px;font-weight:bold" fill="#f0f0f0">P</text></g>
<g transform="translate(634,862)"><rect x="-13" y="-13" width="26" height="26" fill="#1a3a08" stroke="#60e808" stroke-width="2"/><text x="-11" y="5" style="font-size:15px" fill="#60e808" textLength="22" lengthAdjust="spacingAndGlyphs">Dw</text></g>
<g transform="translate(693,863)"><path d="M-13,14 L-6,6 V-12 H-2 V6 H2 V14 Z" fill="#6a7074"/><path d="M0,15 L6,-15 H10 L14,15 H10 L9,6 H6 L4,15Z" fill="#1860b0"/></g>
<!-- tray -->
<path d="M1193,882 V856 Q1194,845 1202,845 H1288 V882Z" fill="#252e33" stroke="#3c464b" stroke-width=".6"/>
<text x="1166.8" y="864" textLength="14.8" style="fill:#e8ecee" lengthAdjust="spacingAndGlyphs">RU</text>
<rect x="1206" y="853" width="40" height="18.5" fill="#0b8a3e" stroke="#f0f0f0"/><rect x="1246.5" y="858" width="2.5" height="8" fill="#111" stroke="#f0f0f0" stroke-width=".6"/>
<text x="1211" y="866" textLength="30" lengthAdjust="spacingAndGlyphs" style="fill:#e8f8ee">100%</text>
<path d="M1261,856 H1267 A6,6 0 0 1 1267,868 H1261 A6,6 0 0 1 1261,856Z" fill="none" stroke="#e8e8e8" stroke-width="1.6"/><rect x="1262" y="858" width="7" height="8" fill="#111"/><path d="M1270,859H1275M1270,865H1275" stroke="#ddd" stroke-width="1.8"/>
<polygon points="1299,861 1303,865 1295,865" fill="#f0f0f0"/>
<g fill="#f4f4f4"><rect x="1316" y="857" width="7" height="6.5"/><rect x="1324.5" y="856" width="7" height="7.5"/><rect x="1316" y="865" width="7" height="6.5"/><rect x="1324.5" y="865" width="7" height="7.5"/></g>
<path d="M1339.5,855V872" stroke="#f4f4f4" stroke-width="1.4"/><path d="M1340,856 H1346 L1351,858 H1353 L1350,862 L1346,860 H1340Z" fill="#f4f4f4"/>
<g transform="translate(1369,864)"><rect x="-6" y="-7" width="12" height="15" fill="none" stroke="#f0f0f0" stroke-width="1.8"/><rect x="-2" y="-9" width="7" height="9" fill="#f0f0f0"/><path d="M-1,-9V-11M3,-9V-11M1,0V6" stroke="#f0f0f0" stroke-width="1.4"/></g>
<g fill="#f0f0f0"><rect x="1386.5" y="867" width="2" height="3"/><rect x="1390" y="865" width="2" height="5"/><rect x="1393.5" y="863" width="2" height="7"/><rect x="1397" y="860" width="2" height="10"/><rect x="1400" y="857" width="2" height="13"/></g>
<g transform="translate(1417,863)"><polygon points="-5,-2 -2,-2 2,-7 2,7 -2,2 -5,2" fill="#e8e8e8"/><path d="M4,-3 Q6,0 4,3M6,-5 Q9,0 6,5" fill="none" stroke="#b0b0b0"/></g>
<g transform="translate(1441,863)"><polygon points="-6,-7 0,-3 -6,1 -11,-3" fill="#e8e8e8"/><polygon points="6,-7 11,-3 6,1 0,-3" fill="#e8e8e8"/><polygon points="-6,2 0,-2 6,2 0,6" fill="#e8e8e8"/><circle cx="4" cy="6" r="4.6" fill="#2ea44f"/><path d="M2,6L3.5,7.5L6,4.5" stroke="#fff" fill="none"/></g>
<g transform="translate(1465,862)"><path d="M-9,2 Q-8,-7 1,-6 Q7,-6 9,0" fill="none" stroke="#e8e8e8" stroke-width="2"/><path d="M-9,2 H7 L4,5 H-7Z" fill="#c8c8c8"/><circle cx="4" cy="6" r="4.6" fill="#e8781a"/><path d="M4,3.5V6.5M4,8V9" stroke="#fff"/></g>
<text x="1503.4" y="859.5" textLength="26" lengthAdjust="spacingAndGlyphs" style="fill:#e8ecee">23:23</text>
<text x="1489.6" y="875.5" textLength="52.5" lengthAdjust="spacingAndGlyphs" style="fill:#e8ecee">04.07.2016</text>
<rect x="1556.5" y="844" width="10" height="37" fill="#3a4449" stroke="#5a6468" stroke-width=".7"/>
</svg>
</body></html>
